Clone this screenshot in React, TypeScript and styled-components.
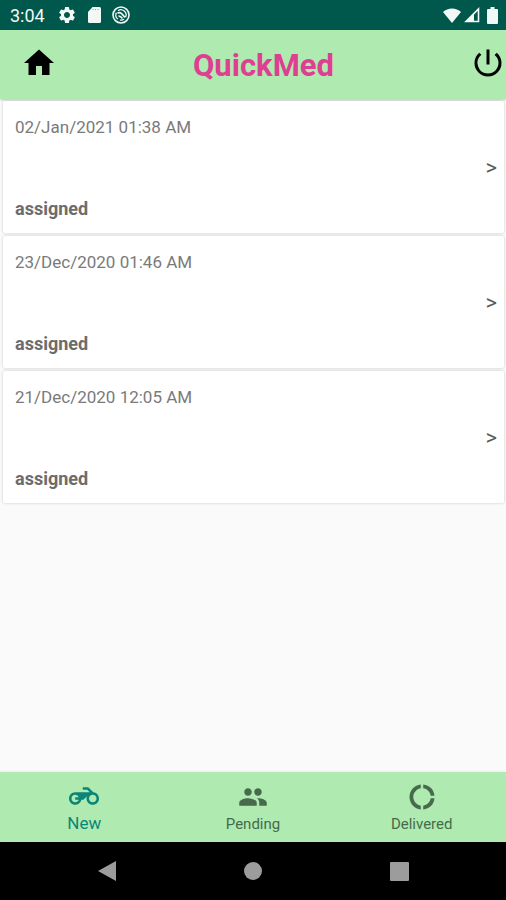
import React from "react";
import styled, { createGlobalStyle } from "styled-components";
import { MdDonutLarge, MdHome, MdPeople, MdPowerSettingsNew, MdSettings } from "react-icons/md";

const GlobalStyle = createGlobalStyle`
  *, *::before, *::after { box-sizing: border-box; }
  html, body, #root { height: 100%; }
  body { margin: 0; font-family: Roboto, sans-serif; background: #fafafa; }
  button { font: inherit; color: inherit; background: none; border: 0; padding: 0; cursor: pointer; }
  svg { display: block; flex: none; }
`;

const Screen = styled.div`
  display: flex;
  flex-direction: column;
  min-height: 100%;
`;

const StatusBar = styled.div`
  display: flex;
  align-items: center;
  justify-content: space-between;
  height: 30px;
  padding: 0 8px 0 10px;
  background: #00574b;
  color: #f2f8f6;
  font-size: 18px;
`;

const StatusGroup = styled.div<{ $gap: number }>`
  display: flex;
  align-items: center;
  gap: ${(p) => p.$gap}px;
`;

const Clock = styled.span`
  padding-right: 1px;
`;

const Header = styled.header`
  display: grid;
  grid-template-columns: 80px 1fr 80px;
  align-items: center;
  height: 69px;
  padding-left: 21px;
  background: #afebb1;
  box-shadow: 0 1px 2px rgba(0, 0, 0, 0.2);
`;

const HeaderButton = styled.button<{ $end?: boolean }>`
  && {
    display: flex;
    justify-content: ${(p) => (p.$end ? "flex-end" : "flex-start")};
    padding-bottom: 4px;
    color: #000;
  }
`;

const Title = styled.h1`
  margin: 0;
  padding-top: 3px;
  text-align: center;
  font-size: 31px;
  line-height: 36px;
  font-weight: 700;
  color: #de3f92;
`;

const OrderList = styled.ul`
  display: flex;
  flex-direction: column;
  flex: 1;
  gap: 3px;
  margin: 0;
  padding: 2px 2px 16px 3px;
  list-style: none;
`;

const OrderCard = styled.button`
  && {
    display: flex;
    align-items: center;
    justify-content: space-between;
    width: 100%;
    min-height: 132px;
    padding: 13px 7px 11px 12px;
    border-radius: 2px;
    background: #fff;
    box-shadow: 0 0 3px rgba(0, 0, 0, 0.2);
    text-align: left;
  }
`;

const OrderText = styled.span`
  display: flex;
  flex-direction: column;
  gap: 56px;
`;

const OrderDate = styled.span`
  font-size: 17px;
  line-height: 26px;
  color: #7a7a7a;
`;

const OrderStatus = styled.span`
  font-size: 18px;
  line-height: 26px;
  font-weight: 700;
  color: #6c6c6c;
`;

const Chevron = styled.span`
  font-size: 22px;
  line-height: 26px;
  color: #5c5c5c;
`;

const TabBar = styled.nav`
  display: grid;
  grid-template-columns: repeat(3, 1fr);
  height: 70px;
  background: #afebb1;
  box-shadow: 0 -1px 2px rgba(0, 0, 0, 0.06);
`;

const Tab = styled.button<{ $active?: boolean }>`
  && {
    display: flex;
    flex-direction: column;
    align-items: center;
    padding-top: ${(p) => (p.$active ? 9 : 10)}px;
    color: ${(p) => (p.$active ? "#0b8577" : "#466a4b")};
    font-size: ${(p) => (p.$active ? 17 : 15)}px;
    line-height: 24px;
  }
`;

const SystemNav = styled.div`
  display: grid;
  grid-template-columns: repeat(3, 146px);
  justify-content: center;
  height: 58px;
  background: #000;
`;

const SystemButton = styled.button`
  && {
    display: flex;
    align-items: center;
    justify-content: center;
    color: #9c9c9c;
  }
`;

const MotorcycleIcon = ({ size }: { size: number }) => (
  <svg width={size} height={size} viewBox="0 0 24 24" fill="currentColor">
    <path d="M19.44 9.03 15.41 5H11v2h3.59l2 2H5c-2.8 0-5 2.2-5 5s2.2 5 5 5c2.46 0 4.45-1.69 4.9-4h1.65l2.77-2.77c-.21.54-.32 1.14-.32 1.77 0 2.8 2.2 5 5 5s5-2.2 5-5c0-2.65-1.97-4.77-4.56-4.97zM7.82 15C7.4 16.15 6.28 17 5 17c-1.63 0-3-1.37-3-3s1.37-3 3-3c1.28 0 2.4.85 2.82 2H5v2h2.82zM19 17c-1.66 0-3-1.34-3-3s1.34-3 3-3 3 1.34 3 3-1.34 3-3 3z" />
  </svg>
);

const orders = [
  { date: "02/Jan/2021 01:38 AM", status: "assigned" },
  { date: "23/Dec/2020 01:46 AM", status: "assigned" },
  { date: "21/Dec/2020 12:05 AM", status: "assigned" },
];

const tabs = [
  { label: "New", Icon: MotorcycleIcon },
  { label: "Pending", Icon: MdPeople },
  { label: "Delivered", Icon: MdDonutLarge },
];

const StorageIcon = () => (
  <svg width="13" height="16" viewBox="0 0 13 16" fill="currentColor">
    <path d="M4.500 0h7A1.500 1.500 0 0 1 13 1.500v13a1.500 1.500 0 0 1-1.500 1.500h-10A1.500 1.500 0 0 1 0 14.500V5z" />
    <path d="M4.500 2.500h6" stroke="#00574b" strokeOpacity="0.5" strokeDasharray="1 1.500" />
  </svg>
);

const DebugIcon = () => (
  <svg width="18" height="18" viewBox="0 0 18 18" fill="none" stroke="currentColor">
    <circle cx="9" cy="9" r="8" strokeWidth="1.6" />
    <path d="M5.800 13a5.200 5.200 0 0 1-1.400-6.400M6 4.700a5.200 5.200 0 0 1 7.600 6.500M12 13.300a5.200 5.200 0 0 1-4 .8" strokeWidth="1.3" />
    <path d="M5.500 7.200c2-1.200 3.500-.4 4.500.8l3 3.500M6.500 10.200c1.500-.4 2.500.5 4 2.300" strokeWidth="1.7" />
  </svg>
);

const WifiIcon = () => (
  <svg width="18" height="15" viewBox="0 0 18 15" fill="currentColor">
    <path d="M9 15 0 4C2.500 1.600 5.500.4 9 .4S15.500 1.600 18 4z" />
  </svg>
);

const SignalIcon = () => (
  <svg width="16" height="16" viewBox="0 0 16 16">
    <path d="M14.500 2v12.500H2z" fill="none" stroke="currentColor" strokeWidth="1.6" />
    <path d="M10 6v9H1z" fill="currentColor" />
  </svg>
);

const BatteryIcon = () => (
  <svg width="11" height="17" viewBox="0 0 11 17" fill="currentColor">
    <path d="M3.500 0h4v2H10a1 1 0 0 1 1 1v13a1 1 0 0 1-1 1H1a1 1 0 0 1-1-1V3a1 1 0 0 1 1-1h2.500z" />
  </svg>
);

export default function App() {
  return (
    <>
      <GlobalStyle />
      <Screen>
        <StatusBar>
          <StatusGroup $gap={11}>
            <Clock>3:04</Clock>
            <MdSettings size={20} />
            <StorageIcon />
            <DebugIcon />
          </StatusGroup>
          <StatusGroup $gap={3}>
            <WifiIcon />
            <StatusGroup $gap={7}>
              <SignalIcon />
              <BatteryIcon />
            </StatusGroup>
          </StatusGroup>
        </StatusBar>
        <Header>
          <HeaderButton aria-label="Home">
            <MdHome size={36} />
          </HeaderButton>
          <Title>QuickMed</Title>
          <HeaderButton $end aria-label="Log out">
            <MdPowerSettingsNew size={36} />
          </HeaderButton>
        </Header>
        <OrderList>
          {orders.map((order) => (
            <li key={order.date}>
              <OrderCard>
                <OrderText>
                  <OrderDate>{order.date}</OrderDate>
                  <OrderStatus>{order.status}</OrderStatus>
                </OrderText>
                <Chevron>&gt;</Chevron>
              </OrderCard>
            </li>
          ))}
        </OrderList>
        <TabBar>
          {tabs.map(({ label, Icon }, i) => (
            <Tab key={label} $active={i === 0} aria-current={i === 0 ? "page" : undefined}>
              <Icon size={30} />
              {label}
            </Tab>
          ))}
        </TabBar>
        <SystemNav>
          <SystemButton aria-label="Back">
            <svg width="18" height="20" viewBox="0 0 18 20" fill="currentColor">
              <path d="M18 0v20L0 10z" />
            </svg>
          </SystemButton>
          <SystemButton aria-label="Home screen">
            <svg width="18" height="18" viewBox="0 0 18 18" fill="currentColor">
              <circle cx="9" cy="9" r="9" />
            </svg>
          </SystemButton>
          <SystemButton aria-label="Recent apps">
            <svg width="19" height="19" viewBox="0 0 19 19" fill="currentColor">
              <rect width="19" height="19" rx="1" />
            </svg>
          </SystemButton>
        </SystemNav>
      </Screen>
    </>
  );
}
